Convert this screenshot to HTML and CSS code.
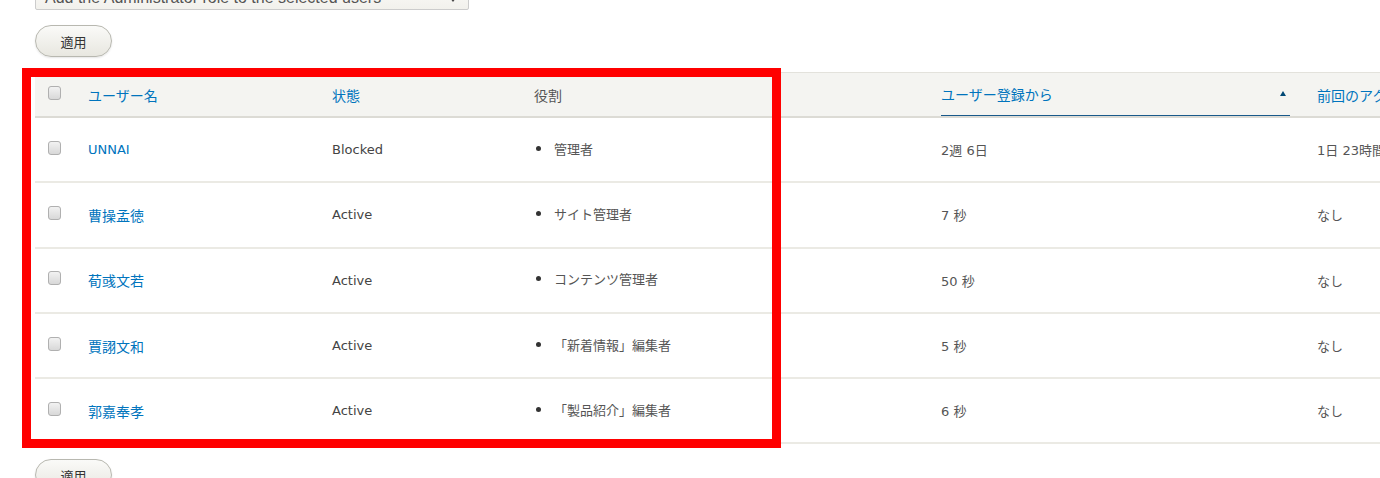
FILE: index.html
```html
<!DOCTYPE html>
<html lang="ja">
<head>
    <meta charset="UTF-8">
    <title>ユーザー</title>
    <link rel="stylesheet" href="styles.css">
</head>
<body>
    <div class="page">
        <div class="bulk-select">
            <span>Add the Administrator role to the selected users</span>
            <span class="caret"></span>
        </div>
        <button class="button" type="button">適用</button>

        <div class="table-wrap">
            <table class="users">
                <colgroup>
                    <col class="c-check">
                    <col class="c-name">
                    <col class="c-status">
                    <col class="c-roles">
                    <col class="c-member">
                    <col class="c-access">
                </colgroup>
                <thead>
                    <tr>
                        <th class="check"><span class="checkbox"></span></th>
                        <th><a href="#">ユーザー名</a></th>
                        <th><a href="#">状態</a></th>
                        <th class="plain">役割</th>
                        <th class="is-active">
                            <div class="sort-head">
                                <a href="#">ユーザー登録から</a>
                                <span class="sort-arrow"></span>
                            </div>
                        </th>
                        <th><a href="#">前回のアクセスから</a></th>
                    </tr>
                </thead>
                <tbody>
                    <tr>
                        <td class="check"><span class="checkbox"></span></td>
                        <td><a href="#" class="name">UNNAI</a></td>
                        <td>Blocked</td>
                        <td><ul class="roles"><li>管理者</li></ul></td>
                        <td class="muted">2週 6日</td>
                        <td class="muted">1日 23時間</td>
                    </tr>
                    <tr>
                        <td class="check"><span class="checkbox"></span></td>
                        <td><a href="#">曹操孟徳</a></td>
                        <td>Active</td>
                        <td><ul class="roles"><li>サイト管理者</li></ul></td>
                        <td class="muted">7 秒</td>
                        <td class="muted">なし</td>
                    </tr>
                    <tr>
                        <td class="check"><span class="checkbox"></span></td>
                        <td><a href="#">荀彧文若</a></td>
                        <td>Active</td>
                        <td><ul class="roles"><li>コンテンツ管理者</li></ul></td>
                        <td class="muted">50 秒</td>
                        <td class="muted">なし</td>
                    </tr>
                    <tr>
                        <td class="check"><span class="checkbox"></span></td>
                        <td><a href="#">賈詡文和</a></td>
                        <td>Active</td>
                        <td><ul class="roles"><li>「新着情報」編集者</li></ul></td>
                        <td class="muted">5 秒</td>
                        <td class="muted">なし</td>
                    </tr>
                    <tr>
                        <td class="check"><span class="checkbox"></span></td>
                        <td><a href="#">郭嘉奉孝</a></td>
                        <td>Active</td>
                        <td><ul class="roles"><li>「製品紹介」編集者</li></ul></td>
                        <td class="muted">6 秒</td>
                        <td class="muted">なし</td>
                    </tr>
                </tbody>
            </table>
        </div>

        <button class="button" type="button">適用</button>

        <div class="highlight"></div>
    </div>
</body>
</html>
```

FILE: styles.css
```css
* {
    margin: 0;
    padding: 0;
    box-sizing: border-box;
}

body {
    font-family: 'DejaVu Sans', 'Noto Sans CJK JP', sans-serif;
    font-size: 13px;
    color: #333;
    background: #fff;
    overflow: hidden;
}

.page {
    position: relative;
    padding-left: 35px;
    width: 1380px;
    height: 478px;
    overflow: hidden;
}

a {
    color: #0074bd;
    text-decoration: none;
}

.bulk-select {
    display: flex;
    align-items: flex-end;
    justify-content: space-between;
    width: 434px;
    height: 30px;
    margin-top: -20px;
    padding: 0 12px 2px 9px;
    border: 1px solid #ccc;
    border-radius: 2px;
    background: linear-gradient(#fcfcfa, #f2f1ec);
    color: #555;
    font-family: 'Liberation Sans', sans-serif;
    font-size: 16px;
    line-height: 19px;
}

.caret {
    width: 0;
    height: 0;
    margin-bottom: 5px;
    border-left: 3px solid transparent;
    border-right: 3px solid transparent;
    border-top: 4px solid #444;
}

.button {
    display: block;
    width: 77px;
    height: 32px;
    margin-top: 15px;
    border: 1px solid #b8b8b0;
    border-radius: 16px;
    background: linear-gradient(#fafaf8, #e8e7e0);
    font-family: 'Noto Sans CJK JP', sans-serif;
    font-size: 13px;
    color: #333;
    box-shadow: 0 1px 2px rgba(0, 0, 0, 0.1);
}

.table-wrap {
    margin-top: 15px;
    width: 1345px;
    overflow: hidden;
}

.users {
    width: 1482px;
    table-layout: fixed;
    border-collapse: collapse;
}

.c-check { width: 53px; }
.c-name { width: 244px; }
.c-status { width: 202px; }
.c-roles { width: 407px; }
.c-member { width: 376px; }
.c-access { width: 200px; }

.users thead tr {
    background: #f4f4f1;
    border-top: 1px solid #e3e2dc;
    border-bottom: 2px solid #dcdbd5;
}

.users th {
    height: 44px;
    padding: 0;
    text-align: left;
    font-weight: normal;
    font-family: 'Noto Sans CJK JP', sans-serif;
    font-size: 14px;
    white-space: nowrap;
    vertical-align: middle;
}

.users th.plain {
    color: #555;
}

.users th.is-active {
    vertical-align: bottom;
    padding-right: 27px;
}

.sort-head {
    display: flex;
    align-items: center;
    justify-content: space-between;
    height: 44px;
    border-bottom: 2px solid #19598a;
    margin-bottom: -1px;
    padding-right: 4px;
}

.sort-arrow {
    width: 0;
    height: 0;
    border-left: 3.5px solid transparent;
    border-right: 3.5px solid transparent;
    border-bottom: 5px solid #004875;
    margin-top: -2px;
}

.users tbody tr {
    border-bottom: 2px solid #ebeae4;
}

.users td {
    height: 65.3px;
    padding: 0;
    vertical-align: middle;
    white-space: nowrap;
    color: #444;
}

.users td a {
    font-family: 'Noto Sans CJK JP', sans-serif;
    font-size: 14px;
}

.users td a.name {
    font-family: 'DejaVu Sans', sans-serif;
    font-size: 13px;
}

.users td.muted {
    color: #555;
}

.check {
    padding-left: 13px !important;
}

.checkbox {
    display: block;
    width: 13px;
    height: 14px;
    margin-top: -4px;
    border: 1px solid #b0b0b0;
    border-radius: 3px;
    background: linear-gradient(#f2f2f2, #d8d8d8);
}

.roles {
    list-style: none;
}

.roles li {
    display: flex;
    align-items: center;
    margin-top: -3px;
    font-family: 'Noto Sans CJK JP', sans-serif;
    color: #555;
}

.roles li::before {
    content: "";
    width: 5px;
    height: 5px;
    margin: 0 13px 0 2px;
    border-radius: 50%;
    background: #333;
}

.highlight {
    position: absolute;
    left: 22px;
    top: 68px;
    width: 759px;
    height: 380px;
    border: 9px solid #ff0000;
    pointer-events: none;
}
```
